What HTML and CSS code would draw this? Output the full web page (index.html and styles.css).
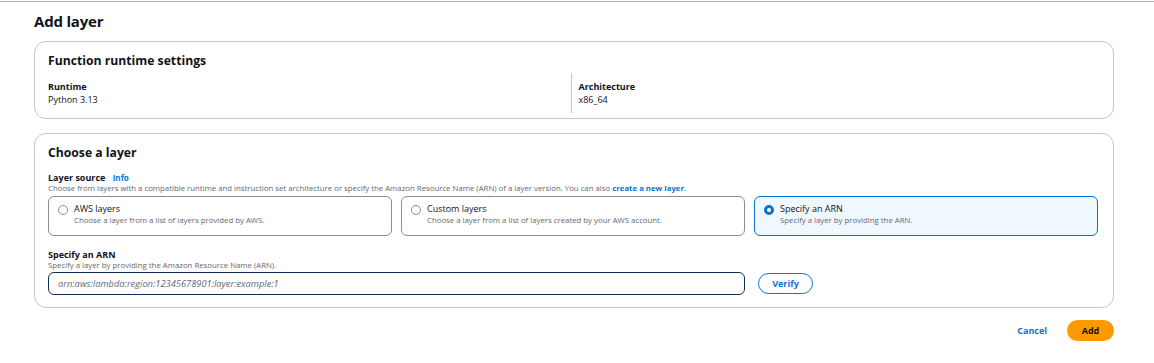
FILE: index.html
```html
<!DOCTYPE html>
<html lang="en">

<head>
    <meta charset="UTF-8">
    <meta name="viewport" content="width=device-width, initial-scale=1.0">
    <title>Add layer</title>
    <link rel="stylesheet" href="styles.css">
</head>

<body>
    <div class="topline"></div>
    <div class="page">
        <h1 class="title">Add layer</h1>

        <div class="card">
            <h2 class="card-title">Function runtime settings</h2>
            <div class="cols">
                <div class="col">
                    <div class="key">Runtime</div>
                    <div class="value">Python 3.13</div>
                </div>
                <div class="col col-right">
                    <div class="key">Architecture</div>
                    <div class="value">x86_64</div>
                </div>
            </div>
        </div>

        <div class="card card-layer">
            <h2 class="card-title">Choose a layer</h2>
            <div class="field-label">Layer source <a class="info">Info</a></div>
            <div class="field-desc">Choose from layers with a compatible runtime and instruction set architecture or specify the Amazon Resource Name (ARN) of a layer version. You can also <a class="link">create a new layer</a>.</div>
            <div class="tiles">
                <div class="tile">
                    <span class="radio"></span>
                    <div>
                        <div class="tile-title">AWS layers</div>
                        <div class="tile-desc">Choose a layer from a list of layers provided by AWS.</div>
                    </div>
                </div>
                <div class="tile">
                    <span class="radio"></span>
                    <div>
                        <div class="tile-title">Custom layers</div>
                        <div class="tile-desc">Choose a layer from a list of layers created by your AWS account.</div>
                    </div>
                </div>
                <div class="tile tile-on">
                    <span class="radio radio-on"></span>
                    <div>
                        <div class="tile-title">Specify an ARN</div>
                        <div class="tile-desc">Specify a layer by providing the ARN.</div>
                    </div>
                </div>
            </div>

            <div class="field-label arn-label">Specify an ARN</div>
            <div class="field-desc">Specify a layer by providing the Amazon Resource Name (ARN).</div>
            <div class="arn-row">
                <input type="text" class="arn-input" placeholder="arn:aws:lambda:region:12345678901:layer:example:1">
                <button class="verify">Verify</button>
            </div>
        </div>

        <div class="actions">
            <a class="cancel">Cancel</a>
            <button class="add">Add</button>
        </div>
    </div>
</body>

</html>
```

FILE: styles.css
```css
body {
    margin: 0px;
    padding: 0px;
    background: #ffffff;
    font-family: "Open Sans", "Liberation Sans", sans-serif;
    color: #0f141a;
}

.topline {
    height: 1px;
    margin-top: 1px;
    background-color: #b4b4bb;
}

.page {
    padding: 0px 40px 0px 34px;
}

.title {
    margin: 0px;
    padding-top: 8px;
    height: 31px;
    font-size: 15px;
    font-weight: 700;
    line-height: 22px;
    letter-spacing: -0.2px;
}

.card {
    border: 1px solid #c6c6cd;
    border-radius: 12px;
    padding: 10px 14px 12px 13px;
    height: 54px;
}

.card-title {
    margin: 0px;
    font-size: 12.2px;
    font-weight: 700;
    line-height: 18px;
}

.cols {
    display: flex;
    margin-top: 11px;
}

.col {
    flex: 1;
}

.col-right {
    border-left: 1px solid #c6c6cd;
    padding-left: 7px;
    padding-top: 8px;
    margin-top: -8px;
    margin-left: 2px;
    height: 32px;
}

.key {
    font-size: 9px;
    font-weight: 700;
    line-height: 12px;
}

.value {
    font-size: 9px;
    line-height: 13px;
}

.card-layer {
    margin-top: 14px;
    height: auto;
    padding-bottom: 12px;
}

.field-label {
    margin-top: 10px;
    font-size: 9px;
    font-weight: 700;
    line-height: 11px;
}

.info {
    margin-left: 5px;
    color: #0972d3;
    font-size: 8px;
}

.field-desc {
    font-size: 7.8px;
    line-height: 11px;
    color: #656871;
}

.link {
    color: #0972d3;
    font-weight: 700;
}

.tiles {
    display: grid;
    grid-template-columns: 1fr 1fr 1fr;
    gap: 9px;
    margin-top: 2px;
    padding-right: 1px;
}

.tile {
    display: flex;
    gap: 6px;
    border: 1px solid #8c8c94;
    border-radius: 6px;
    padding: 6px 9px 8px 9px;
    height: 24px;
}

.tile-on {
    border-color: #0972d3;
    background-color: #f0f8ff;
}

.radio {
    flex: none;
    width: 8px;
    height: 8px;
    margin-top: 2px;
    border: 1px solid #8c8c94;
    border-radius: 50%;
    background: #ffffff;
}

.radio-on {
    border: 3px solid #0972d3;
    width: 4px;
    height: 4px;
}

.tile-title {
    font-size: 9px;
    line-height: 12px;
}

.tile-desc {
    font-size: 7.8px;
    line-height: 11px;
    color: #656871;
}

.arn-label {
    margin-top: 13px;
}

.arn-row {
    display: flex;
    align-items: center;
    gap: 13px;
    margin-top: 1px;
}

.arn-input {
    width: 697px;
    box-sizing: border-box;
    height: 23px;
    border: 1px solid #0f2e57;
    border-radius: 6px;
    padding: 0px 9px;
    font-family: "Open Sans", "Liberation Sans", sans-serif;
    font-size: 9.3px;
}

.arn-input::placeholder {
    color: #5f6b7a;
    font-style: italic;
}

.verify {
    width: 55px;
    height: 21px;
    border: 1px solid #0972d3;
    border-radius: 12px;
    background: #ffffff;
    color: #0972d3;
    font-family: "Open Sans", "Liberation Sans", sans-serif;
    font-weight: 700;
    font-size: 9px;
}

.actions {
    display: flex;
    justify-content: flex-end;
    align-items: center;
    gap: 20px;
    margin-top: 12px;
}

.cancel {
    color: #0972d3;
    font-weight: 700;
    font-size: 9px;
}

.add {
    width: 47px;
    height: 21px;
    border: none;
    border-radius: 11px;
    background-color: #ff9900;
    color: #0f141a;
    font-family: "Open Sans", "Liberation Sans", sans-serif;
    font-weight: 700;
    font-size: 9px;
}
```
